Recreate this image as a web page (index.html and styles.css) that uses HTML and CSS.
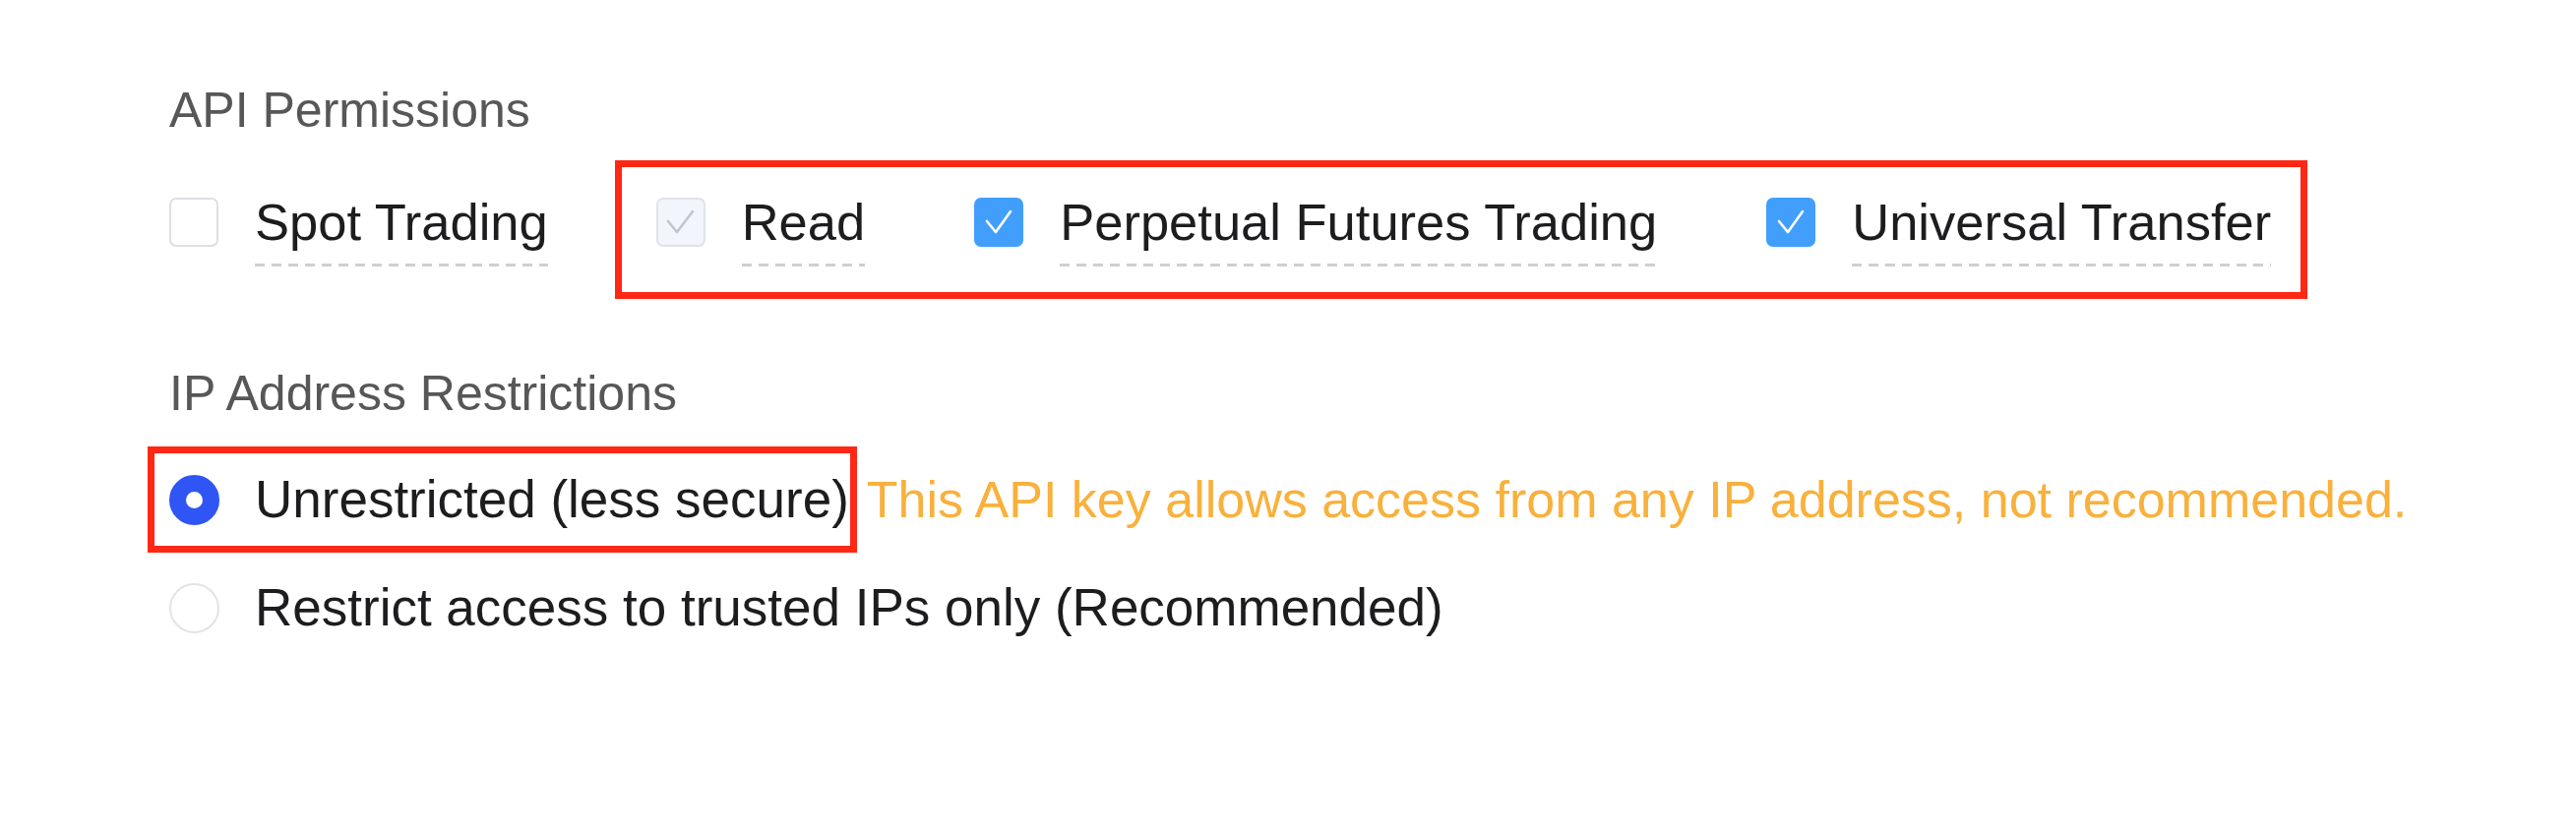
FILE: index.html
```html
<!DOCTYPE html>
<html lang="en">
<head>
<meta charset="utf-8">
<title>API Permissions</title>
<link rel="stylesheet" href="styles.css">
</head>
<body>
<div class="page">
  <div class="section-title">API Permissions</div>
  <div class="perm-row">
    <label class="opt">
      <span class="cb"></span>
      <span class="opt-label">Spot Trading</span>
    </label>
    <div class="highlight highlight-perms">
      <label class="opt">
        <span class="cb cb-disabled"><svg viewBox="0 0 50 50" class="tick"><polyline points="12,24 21,35 37,14"/></svg></span>
        <span class="opt-label">Read</span>
      </label>
      <label class="opt">
        <span class="cb cb-checked"><svg viewBox="0 0 50 50" class="tick"><polyline points="13,24 22,35 37,14"/></svg></span>
        <span class="opt-label">Perpetual Futures Trading</span>
      </label>
      <label class="opt">
        <span class="cb cb-checked"><svg viewBox="0 0 50 50" class="tick"><polyline points="13,24 22,35 37,14"/></svg></span>
        <span class="opt-label">Universal Transfer</span>
      </label>
    </div>
  </div>

  <div class="section-title section-second">IP Address Restrictions</div>
  <div class="radio-row radio-row-first">
    <div class="highlight highlight-radio">
      <label class="opt opt-radio">
        <span class="radio radio-on"></span>
        <span class="radio-text">Unrestricted (less secure)</span>
      </label>
    </div>
    <span class="warn">This API key allows access from any IP address, not recommended.</span>
  </div>
  <div class="radio-row radio-row-second">
    <label class="opt opt-radio">
      <span class="radio"></span>
      <span class="radio-text">Restrict access to trusted IPs only (Recommended)</span>
    </label>
  </div>
</div>
</body>
</html>
```
FILE: styles.css
```css
html, body {
  margin: 0;
  padding: 0;
  background: #ffffff;
}

body {
  font-family: "Liberation Sans", Arial, sans-serif;
  color: #1d1d1f;
}

.page {
  padding: 84px 0 0 172px;
}

.section-title {
  font-size: 50px;
  line-height: 56px;
  color: #575757;
  white-space: nowrap;
}

.section-second {
  margin-top: 68px;
}

.perm-row {
  display: flex;
  align-items: center;
  margin-top: 23px;
}

.opt {
  display: flex;
  align-items: flex-start;
  white-space: nowrap;
}

.cb {
  box-sizing: border-box;
  width: 50px;
  height: 50px;
  margin-top: 5px;
  margin-right: 37px;
  border: 2px solid #dcdfe6;
  border-radius: 7px;
  background: #ffffff;
  display: flex;
  align-items: center;
  justify-content: center;
  flex: none;
}

.cb-disabled {
  background: #f2f6fc;
  border-color: #dfe3ea;
}

.cb-checked {
  background: #419ffb;
  border-color: #419ffb;
}

.tick {
  width: 50px;
  height: 50px;
  flex: none;
}

.tick polyline {
  fill: none;
  stroke: #ffffff;
  stroke-width: 2.6;
  stroke-linecap: round;
  stroke-linejoin: round;
}

.cb-disabled .tick polyline {
  stroke: #c0c4cc;
}

.opt-label {
  font-size: 52.5px;
  line-height: 60px;
  padding-bottom: 15px;
  background-image: linear-gradient(to right, #cfcfcf 10px, transparent 10px);
  background-size: 17px 3px;
  background-repeat: repeat-x;
  background-position: left bottom;
}

.highlight {
  border: 7px solid #ff2814;
}

.highlight-perms {
  display: flex;
  align-items: center;
  gap: 111px;
  margin-left: 68px;
  padding: 26px 30px 26px 35px;
}

.radio-row {
  display: flex;
  align-items: center;
}

.radio-row-first {
  margin-left: -22px;
  margin-top: 26px;
}

.radio-row-second {
  margin-top: 26px;
}

.highlight-radio {
  padding: 17px 1px 17px 15px;
}

.opt-radio {
  align-items: center;
}

.radio {
  box-sizing: border-box;
  width: 51px;
  height: 51px;
  border-radius: 50%;
  border: 2px solid #e2e4ea;
  background: #ffffff;
  margin-right: 36px;
  flex: none;
}

.radio-on {
  border: 17.5px solid #2f55f4;
  background: #ffffff;
}

.radio-text {
  font-size: 53px;
  line-height: 60px;
}

.warn {
  margin-left: 10px;
  font-size: 52px;
  line-height: 60px;
  color: #f8b13c;
  white-space: nowrap;
}
```
